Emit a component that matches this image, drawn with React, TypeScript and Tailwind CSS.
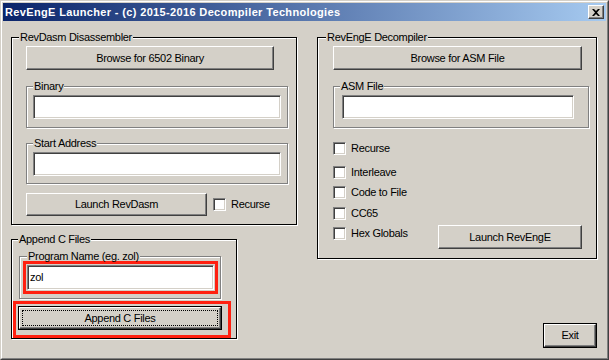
import type { ReactNode } from "react";

const raised =
  "border border-t-white border-l-white border-r-[#404040] border-b-[#404040] bg-[#d4d0c8] shadow-[inset_-1px_-1px_0_#808080]";
const sunken =
  "border border-t-[#808080] border-l-[#808080] border-r-white border-b-white bg-white shadow-[inset_1px_1px_0_#404040,inset_-1px_-1px_0_#d4d0c8]";

function Button({
  children,
  className = "",
  isDefault = false,
  focused = false,
}: {
  children: ReactNode;
  className?: string;
  isDefault?: boolean;
  focused?: boolean;
}) {
  if (isDefault) {
    return (
      <div className={`border border-black ${className}`}>
        <div className={`flex h-full w-full p-[2px] ${raised}`}>
          <span
            className={`flex flex-1 items-center justify-center ${
              focused ? "border border-dotted border-black" : ""
            }`}
          >
            {children}
          </span>
        </div>
      </div>
    );
  }
  return (
    <div className={`flex items-center justify-center ${raised} ${className}`}>{children}</div>
  );
}

function Group({
  label,
  dark = false,
  legendClass = "",
  className = "",
  children,
}: {
  label: string;
  dark?: boolean;
  legendClass?: string;
  className?: string;
  children: ReactNode;
}) {
  return (
    <fieldset
      className={`border ${dark ? "border-black" : "border-[#808080]"} shadow-[inset_1px_1px_0_#fff,1px_1px_0_#fff] ${className}`}
    >
      <legend className={`bg-[#d4d0c8] px-px leading-[13px] ${legendClass}`}>{label}</legend>
      {children}
    </fieldset>
  );
}

function Field({ value = "", className = "" }: { value?: string; className?: string }) {
  return (
    <div className={`flex items-center pl-[2px] ${sunken} ${className}`}>{value}</div>
  );
}

function Check({ label, className = "" }: { label: string; className?: string }) {
  return (
    <div className={`flex items-center ${className}`}>
      <span className={`h-[13px] w-[13px] shrink-0 ${sunken}`} />
      <span className="ml-[5px] leading-[13px]">{label}</span>
    </div>
  );
}

export default function App() {
  return (
    <div className="h-[360px] w-[609px] border border-t-[#d4d0c8] border-l-[#d4d0c8] border-r-[#404040] border-b-[#404040] bg-[#d4d0c8] font-['Liberation_Sans',Arial,sans-serif] text-[11px] tracking-[-0.3px] text-black">
      <div className="flex h-full w-full flex-col border border-t-white border-l-white border-r-[#808080] border-b-[#808080] p-px">
        <div className="flex h-[18px] items-center bg-[linear-gradient(to_right,#0a246a,#a6caf0)] pl-[2px]">
          <span className="flex-1 text-[11px] font-bold tracking-[0.35px] text-white">
            RevEngE Launcher - (c) 2015-2016 Decompiler Technologies
          </span>
          <div className={`mr-[2px] flex h-[14px] w-[16px] items-center justify-center ${raised}`}>
            <svg width="8" height="7" viewBox="0 0 8 7">
              <path d="M0 0h2l2 2 2-2h2L5 3.5 8 7H6L4 5 2 7H0l3-3.5z" fill="#000" />
            </svg>
          </div>
        </div>

        <div className="flex gap-[20px] pl-[8px] pt-[10px]">
          {/* left column */}
          <div className="flex w-[286px] flex-col">
            <Group label="RevDasm Disassembler" dark legendClass="ml-[7px]" className="pb-[8px]">
              <Button className="ml-[14px] mt-[2px] h-[24px] w-[248px]">Browse for 6502 Binary</Button>
              <Group label="Binary" legendClass="ml-[6px]" className="ml-[14px] mt-[10px] w-[262px] pb-[8px]">
                <Field className="ml-[6px] mt-[2px] h-[24px] w-[248px]" />
              </Group>
              <Group label="Start Address" legendClass="ml-[6px]" className="ml-[14px] mt-[9px] w-[262px] pb-[7px]">
                <Field className="ml-[6px] mt-[2px] h-[24px] w-[248px]" />
              </Group>
              <div className="ml-[14px] mt-[9px] flex items-center">
                <Button className="h-[23px] w-[181px]">Launch RevDasm</Button>
                <Check label="Recurse" className="ml-[6px]" />
              </div>
            </Group>

            <Group label="Append C Files" dark legendClass="ml-[6px]" className="mt-[8px] w-[226px]">
              <Group label="Program Name (eg. zol)" legendClass="ml-[7px]" className="ml-[7px] mt-[4px] w-[202px] pb-[4px]">
                <div className="-mt-[2px] ml-[3px] w-[195px] border-[3px] border-[#ff2010] p-px">
                  <Field value="zol" className="h-[25px]" />
                </div>
              </Group>
              <div className="ml-px mt-[2px] h-[37px] w-[218px] border-[3px] border-[#ff2010] pl-[2px] pt-[2px]">
                <Button isDefault focused className="h-[24px] w-[204px]">
                  Append C Files
                </Button>
              </div>
            </Group>
          </div>

          {/* right column */}
          <div className="flex w-[280px] flex-col">
            <Group label="RevEngE Decompiler" dark legendClass="ml-[8px]" className="pb-[9px]">
              <Button className="ml-[15px] mt-[2px] h-[24px] w-[249px]">Browse for ASM File</Button>
              <Group label="ASM File" legendClass="ml-[6px]" className="ml-[15px] mt-[10px] w-[256px] pb-[8px]">
                <Field className="ml-[8px] mt-[2px] h-[24px] w-[232px]" />
              </Group>
              <div className="ml-[15px] flex flex-col">
                <Check label="Recurse" className="mt-[14px]" />
                <Check label="Interleave" className="mt-[11px]" />
                <Check label="Code to File" className="mt-[7px]" />
                <Check label="CC65" className="mt-[8px]" />
                <div className="mt-[7px] flex items-start">
                  <Check label="Hex Globals" />
                  <Button className="-mt-[2px] ml-auto mr-[14px] h-[24px] w-[144px]">Launch RevEngE</Button>
                </div>
              </div>
            </Group>
            <Button isDefault className="ml-auto mt-[64px] h-[25px] w-[54px]">
              Exit
            </Button>
          </div>
        </div>
      </div>
    </div>
  );
}
